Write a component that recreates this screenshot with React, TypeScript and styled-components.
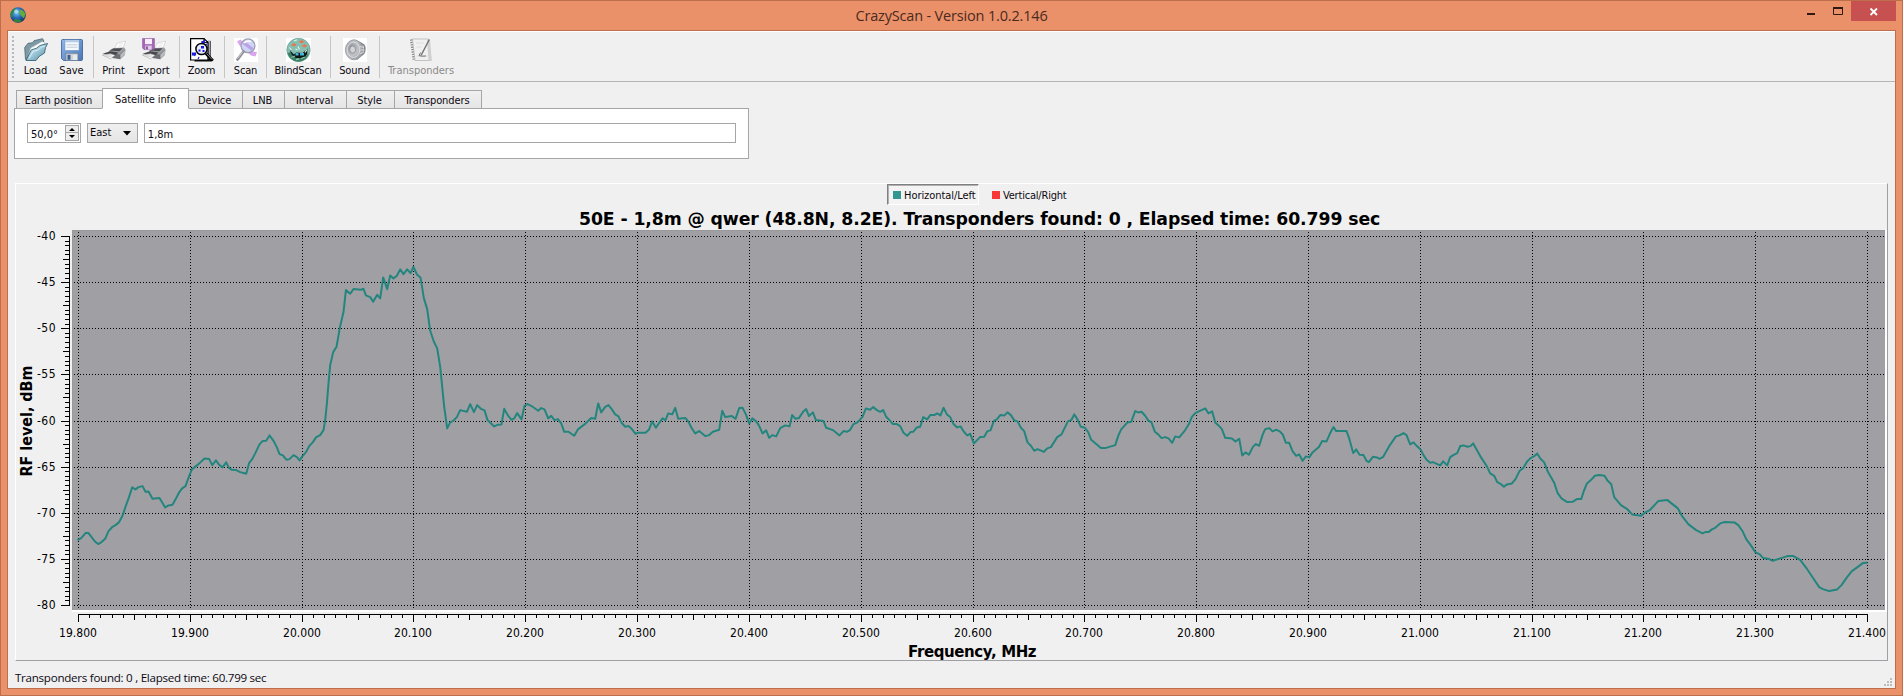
import React from "react";
import styled, { createGlobalStyle } from "styled-components";

const UI_FONT = '"DejaVu Sans Condensed", "DejaVu Sans", "Noto Sans", sans-serif';
const SEGOE = '"Open Sans", "Noto Sans", sans-serif';

const GlobalStyle = createGlobalStyle`
  * { box-sizing: border-box; }
  body { margin: 0; background: #eb916a; overflow: hidden; }
`;

const Window = styled.div`
  width: 1903px;
  height: 696px;
  display: flex;
  flex-direction: column;
  background: #eb916a;
  border: 1px solid #bd6e4b;
  padding: 0 6px 6px;
  font-family: ${UI_FONT};
  font-stretch: condensed;
  font-size: 11px;
  color: #0c0810;
`;

const TitleBar = styled.header`
  height: 29px;
  flex: none;
  display: flex;
  justify-content: space-between;
  align-items: flex-start;
`;

const TitleSide = styled.div<{ $end?: boolean }>`
  width: 120px;
  height: 29px;
  display: flex;
  justify-content: ${(p) => (p.$end ? "flex-end" : "flex-start")};
  padding: ${(p) => (p.$end ? "0" : "5px 0 0 2px")};
`;

const WindowTitle = styled.h1`
  margin: 0;
  font: 400 14.5px/30px ${SEGOE};
  font-stretch: normal;
  letter-spacing: -0.17px;
  color: #4a2a1e;
  white-space: nowrap;
`;

const CaptionButton = styled.button<{ $close?: boolean }>`
  border: 0;
  padding: 0;
  width: ${(p) => (p.$close ? "45px" : "27px")};
  height: 20px;
  background: ${(p) => (p.$close ? "#c75050" : "transparent")};
  svg { display: block; margin: auto; }
`;

const Client = styled.main`
  flex: 1;
  min-height: 0;
  display: flex;
  flex-direction: column;
  background: #f0f0f0;
  border: 1px solid #bd6e4b;
`;

const Toolbar = styled.div`
  height: 51px;
  flex: none;
  display: flex;
  gap: 1px;
  padding-left: 4px;
  border-top: 1px solid #fff;
  border-bottom: 1px solid #b5b5b5;
`;

const Handle = styled.div`
  width: 2px;
  height: 42px;
  margin: 4px 3px 0 0;
  background: repeating-linear-gradient(#b9b9b9 0 2px, transparent 2px 4px);
`;

const ToolButton = styled.button<{ $w: number }>`
  width: ${(p) => p.$w}px;
  padding: 6px 0 0;
  border: 0;
  background: none;
  display: flex;
  flex-direction: column;
  align-items: center;
  font: inherit;
  line-height: 15px;
  color: #0c0810;
  white-space: nowrap;
  &:disabled { color: #8a8a8a; }
  svg { display: block; flex: none; }
`;

const ToolLabel = styled.span<{ $ls?: number }>`
  margin-top: 1px;
  letter-spacing: ${(p) => p.$ls ?? 0}px;
`;

const Separator = styled.div<{ $w: number }>`
  width: ${(p) => p.$w}px;
  height: 42px;
  margin-top: 4px;
  background: linear-gradient(#c6c6c6, #c6c6c6) ${(p) => (p.$w === 5 ? 2 : 3)}px 0 / 1px 100% no-repeat;
`;

const Tabs = styled.nav`
  display: flex;
  align-items: flex-end;
  height: 21px;
  margin: 6px 0 -1px 8px;
  position: relative;
`;

const Tab = styled.button<{ $w: number; $active?: boolean; $first?: boolean }>`
  width: ${(p) => p.$w}px;
  height: ${(p) => (p.$active ? 21 : 19)}px;
  padding: ${(p) => (p.$active ? "2px 0 0" : "2px 2px 0 0")};
  border: 1px solid #a6a6a6;
  border-left-width: ${(p) => (p.$first || p.$active ? 1 : 0)}px;
  border-right-width: ${(p) => (p.$first ? 0 : 1)}px;
  border-bottom-color: ${(p) => (p.$active ? "#fff" : "#a6a6a6")};
  background: ${(p) => (p.$active ? "#fff" : "linear-gradient(#f0f0f0, #e5e5e5)")};
  font: inherit;
  line-height: 15px;
  letter-spacing: -0.1px;
  color: inherit;
  white-space: nowrap;
`;

const TabPane = styled.section`
  width: 735px;
  height: 51px;
  margin-left: 6px;
  flex: none;
  display: flex;
  gap: 6px;
  padding: 14px 12px;
  background: #fff;
  border: 1px solid #a6a6a6;
`;

const Field = styled.div<{ $w: number; $grey?: boolean; $pad?: number }>`
  width: ${(p) => p.$w}px;
  height: 20px;
  display: flex;
  align-items: center;
  justify-content: space-between;
  padding: 0 1px 0 ${(p) => p.$pad ?? 3}px;
  border: 1px solid #a6a6a6;
  background: ${(p) => (p.$grey ? "linear-gradient(#f0f0f0, #e5e5e5)" : "#fff")};
  line-height: 18px;
`;

const FieldText = styled.span`
  padding-top: 3px;
  line-height: 15px;
`;

const Spinner = styled.div`
  width: 14px;
  height: 16px;
  display: grid;
  grid-template-rows: 1fr 1fr;
  border: 1px solid #a6a6a6;
  background: #ededed;
`;

const SpinHalf = styled.span<{ $line?: boolean }>`
  display: flex;
  align-items: center;
  justify-content: center;
  border-bottom: ${(p) => (p.$line ? "1px solid #a6a6a6" : "0")};
`;

const ChartFrame = styled.section`
  width: 1873px;
  height: 478px;
  margin: 24px 0 0 7px;
  flex: none;
  display: flex;
  flex-direction: column;
  align-items: center;
  border: 1px solid;
  border-color: #fff #a0a0a4 #a0a0a4 #fff;
`;

const Legend = styled.div`
  display: flex;
  height: 21px;
  align-self: flex-start;
  margin-left: 871px;
  gap: 7px;
`;

const LegendItem = styled.span<{ $sunken?: boolean; $color: string }>`
  display: flex;
  align-items: center;
  gap: 3px;
  width: ${(p) => (p.$sunken ? 92 : 80)}px;
  padding: 1px 0 0 5px;
  letter-spacing: ${(p) => (p.$sunken ? -0.05 : -0.2)}px;
  white-space: nowrap;
  border: 1px solid transparent;
  ${(p) => p.$sunken && "border-color: #808080 #fff #fff #808080; box-shadow: inset 1px 1px 0 #b0b0b0; background: #f3f3f3;"}
  &::before {
    content: "";
    width: 8px;
    height: 8px;
    flex: none;
    background: ${(p) => p.$color};
  }
`;

const ChartTitle = styled.h2`
  margin: 0;
  height: 25px;
  align-self: flex-start;
  padding-left: 563px;
  font: 700 17.3px/28px "DejaVu Sans", sans-serif;
  font-stretch: normal;
  letter-spacing: -0.11px;
  color: #000;
  white-space: nowrap;
`;

const Plot = styled.svg`
  display: block;
  flex: none;
  width: 1871px;
  height: 412px;
  font: 400 12px ${UI_FONT};
  font-stretch: condensed;
`;

const AxisTitle = styled.div`
  height: 18px;
  align-self: flex-start;
  padding-left: 892px;
  font: 700 15px/21px "DejaVu Sans", sans-serif;
  font-stretch: normal;
  letter-spacing: -0.4px;
  color: #000;
  white-space: nowrap;
`;

const StatusBar = styled.footer`
  flex: 1;
  display: flex;
  justify-content: space-between;
  align-items: flex-end;
  padding: 0 3px 1px 7px;
  font: 400 11.6px/18px ${SEGOE};
  font-stretch: normal;
  letter-spacing: -0.27px;
`;

/* ---------- icons ---------- */

const Globe = () => (
  <svg width="18" height="18" viewBox="0 0 18 18">
    <defs>
      <radialGradient id="sea" cx=".42" cy=".35" r=".65">
        <stop offset="0" stopColor="#7cc9f5" />
        <stop offset=".5" stopColor="#2a6bbd" />
        <stop offset="1" stopColor="#14345f" />
      </radialGradient>
    </defs>
    <circle cx="9" cy="9" r="7.8" fill="url(#sea)" />
    <path d="M1.6 7Q3 3 6.500 2L6 5 3.500 7.500 4 11 2 11Z" fill="#2d8c3c" />
    <path d="M11 3.500Q15 4 16.300 8L15 12.500 12.500 10 10 7Z" fill="#5fae3a" />
    <path d="M5 13l5 .5 3 1.500Q9 17.500 5 15.400Z" fill="#2f8540" />
    <ellipse cx="7.300" cy="5.600" rx="2.300" ry="2" fill="#c4e9ff" opacity=".65" />
  </svg>
);

const Folder = () => (
  <svg width="24" height="24" viewBox="0 0 24 24">
    <defs>
      <linearGradient id="fold" x1="0" y1="0" x2="1" y2="1">
        <stop offset="0" stopColor="#e4f3f8" />
        <stop offset=".5" stopColor="#9cc7d8" />
        <stop offset="1" stopColor="#4b8199" />
      </linearGradient>
    </defs>
    <path d="M1.500 21.500L.7 9.500 4 5.300 8.500 4.800 10 2.700 18.500.7 20 3 5 19Z" fill="#7d9aa6" stroke="#4b6570" strokeWidth=".8" />
    <path d="M4 18L6.500 10 18 3.500 21 4.500 19 8Z" fill="#fdfdfd" stroke="#8aa" strokeWidth=".5" />
    <path d="M2 22.500L7.300 11.800Q13 11 16 7.500L23.600 5.500Q21 9 20.500 15Q15 17.500 12 22.500Z" fill="url(#fold)" stroke="#3e6475" strokeWidth=".9" />
    <path d="M5 20.500L9 13.500Q15 12.500 17.500 9L21 8" fill="none" stroke="#eaf8fd" strokeWidth="1" opacity=".8" />
  </svg>
);

const Floppy = () => (
  <svg width="24" height="24" viewBox="0 0 24 24">
    <defs>
      <linearGradient id="flop" x1="0" y1="0" x2="1" y2="1">
        <stop offset="0" stopColor="#91b8ea" />
        <stop offset="1" stopColor="#4a76b5" />
      </linearGradient>
    </defs>
    <path d="M1.500 2.500Q1.500 1.500 2.700 1.500H21.300Q22.500 1.500 22.500 2.500V21.500Q22.500 22.500 21.300 22.500H3.500L1.500 20.500Z" fill="url(#flop)" stroke="#4468a0" strokeWidth=".9" />
    <rect x="5" y="2" width="14" height="10.300" fill="#f6f9fc" stroke="#7b9bc8" strokeWidth=".6" />
    <rect x="5" y="2" width="14" height="2.300" fill="#b5cbe6" />
    <path d="M6.500 6.800h11M6.500 9.200h11" stroke="#bfcbd8" />
    <rect x="6" y="15.300" width="12" height="7" fill="#cfd4d6" stroke="#6b7d92" strokeWidth=".6" />
    <rect x="7.500" y="16.800" width="3" height="5" fill="#3f5f8e" />
    <path d="M13 17h4v5h-4Z" fill="#e8ebec" />
  </svg>
);

const PrinterShape = () => (
  <g>
    <path d="M12 11.500L15.500 5 23.700 3 20.500 11.500Z" fill="#fff" stroke="#c2c2c2" strokeWidth=".6" />
    <path d="M17 6.500l4-1M16 8.500l4-1" stroke="#ddd" strokeWidth=".7" />
    <path d="M7 12.800L11.500 10 22 9.500 23.500 11.500 18.500 16.500 8 16Z" fill="#9a9da0" />
    <path d="M7.500 12.500l4-2 9-.3-3 3Z" fill="#4a4c50" />
    <path d="M8.500 15.500l9.500.8 5.300-4.800-.3 5.200-4.700 4.500-8-1.200Z" fill="#6b6e72" />
    <path d="M18.300 16.700l4.900-4.700-.2 4.500-4.600 4.400Z" fill="#b9bcbf" />
    <path d="M.8 15.800L8 13.300 16.500 14.500 11.500 18.500Z" fill="#45474b" />
    <path d="M.3 17L8.500 15.800 13 17.200 8.500 20.800Z" fill="#f6f6f6" stroke="#a5a5a5" strokeWidth=".6" />
    <path d="M3 17.600l6-.8M5 18.700l5-.8" stroke="#c4c4c4" strokeWidth=".6" />
  </g>
);

const Printer = () => (
  <svg width="24" height="24" viewBox="0 0 24 24"><PrinterShape /></svg>
);

const ExportIcon = () => (
  <svg width="24" height="24" viewBox="0 0 24 24">
    <PrinterShape />
    <path d="M.6.600h11.800v11H2L.6 10Z" fill="#a468b6" stroke="#8a4d9c" strokeWidth=".6" />
    <rect x="3" y=".9" width="7" height="5.200" fill="#f8eefa" />
    <rect x="3.300" y="7.600" width="6.400" height="4" fill="#e2cce8" />
    <rect x="4.200" y="8.400" width="1.600" height="3.100" fill="#7a4290" />
  </svg>
);

const ZoomIcon = () => (
  <svg width="24" height="24" viewBox="0 0 24 24">
    <path d="M4.500 3H21v20.500H4.500Z" fill="#111" />
    <path d="M18 2.500h2.500V21H18Z" fill="#a9a9b4" />
    <path d="M.6.600H14l4 4V22H.6Z" fill="#fff" stroke="#000" strokeWidth="1.200" />
    <path d="M14 .6v4h4" fill="none" stroke="#000" />
    <path d="M2 16l2.500-1M4 18l1.500-2M13 4l2-2M15 7l2-1M8 21l1-2M2.500 15h3v1.800h-3ZM12 3.500h2v2h-2Z" stroke="#1b1be0" strokeWidth="1.200" fill="#1b1be0" />
    <circle cx="11.500" cy="11" r="5.600" fill="#e9ebff" stroke="#000" strokeWidth="1.500" />
    <path d="M8.500 11.500h2v2h-2ZM11 8h3v2.500h-3ZM12.500 12h2v2h-2Z" fill="#1b1be0" />
    <path d="M15.800 15.300L22.800 22.800" stroke="#000" strokeWidth="3" />
    <path d="M16.500 15.500L22 21.400" stroke="#aaa" strokeWidth=".8" />
  </svg>
);

const ScanIcon = () => (
  <svg width="24" height="24" viewBox="0 0 24 24">
    <rect width="24" height="24" fill="#fff" />
    <path d="M3 3.500L6.500 1.500 9 4 19 13.500 23 14 21.500 18.500 17 17.500 5.500 7.500Z" fill="#dba5ee" />
    <circle cx="14" cy="7.800" r="6.900" fill="#cfd3f6" stroke="#9ba0b5" strokeWidth="1.300" />
    <path d="M9.500 4.500L18.500 11.500" stroke="#ac82dc" strokeWidth="3.400" opacity=".6" />
    <path d="M10 5Q13 1.800 17 3.500" stroke="#fff" strokeWidth="1.500" fill="none" />
    <path d="M9.500 13.500L3.500 21.500" stroke="#8f8a96" strokeWidth="2.800" strokeLinecap="round" />
    <path d="M9 13.500L3.500 20.500" stroke="#d9d7dd" strokeWidth="1" />
  </svg>
);

const BlindIcon = () => (
  <svg width="25" height="24" viewBox="0 0 25 24">
    <rect width="25" height="24" fill="#fff" />
    <circle cx="12.500" cy="12" r="11.700" fill="#86bfb2" stroke="#5f9388" strokeWidth=".6" />
    <path d="M1.500 15.500Q5 13 7 15L9 18.500 20 18 23 14.500Q21.500 23 12.500 23.700Q4 23 1.500 15.500Z" fill="#3c8068" />
    <path d="M3.500 11.500l4 5 3-2 6 .5 3-2.500 2-2-.3 5.500-3.200 4H10L6 17Z" fill="#0b1717" />
    <path d="M9.500 15h3v2.500h-3ZM14 15h4v2.500h-4Z" fill="#45b5dc" />
    <path d="M5 7.500l2.500-2.500 3 1.500-1.500 2ZM12.500 4l3-2 3 1.500-2.500 2ZM15.500 8l3-2 3 2-3 1.500Z" fill="#e07a52" />
    <path d="M8 3l3-1.200M3.500 9.500l2 2.500M21 11.500l-2 3M12 8.500l1.500 3M9.500 11l2 1" stroke="#dcf3ea" strokeWidth="1.200" />
    <path d="M5.500 19.500l3.500-1.500M15 20.500l4-1.500M10 21.500l3-.5" stroke="#8cc7a0" strokeWidth="1.300" />
  </svg>
);

const SoundIcon = () => (
  <svg width="24" height="24" viewBox="0 0 24 24">
    <defs>
      <radialGradient id="cone" cx=".35" cy=".4" r=".7">
        <stop offset="0" stopColor="#8b8f96" />
        <stop offset=".55" stopColor="#bfc2c6" />
        <stop offset="1" stopColor="#979ba0" />
      </radialGradient>
    </defs>
    <rect width="24" height="24" fill="#fff" />
    <path d="M12 2Q17 3 21.500 6.500Q24 11 21.300 16L14 22Z" fill="#83878d" />
    <path d="M15 5l6 3v6l-5 4Z" fill="#b7babe" />
    <ellipse cx="11" cy="11.800" rx="8.600" ry="10" fill="url(#cone)" stroke="#999da2" strokeWidth=".9" />
    <ellipse cx="10.500" cy="11.800" rx="6.300" ry="7.600" fill="none" stroke="#dcdee0" strokeWidth=".9" />
    <ellipse cx="9.700" cy="11.500" rx="2.900" ry="3.500" fill="#d2d4d7" stroke="#808080" strokeWidth=".6" />
    <path d="M17 8.500l4 1M17.500 12h4M17 15.500l3.500-1" stroke="#eee" strokeWidth=".7" />
  </svg>
);

const NotebookIcon = () => (
  <svg width="24" height="24" viewBox="0 0 24 24">
    <path d="M3.500 1H19.500L22 22.500H6Z" fill="#f0f0f0" stroke="#b5b5b5" strokeWidth=".8" />
    <path d="M18 1.500H21L22.800 22.700H19.500Z" fill="#d0d0d0" />
    <path d="M2 1.500L4.800 22.500" stroke="#858585" strokeWidth="2.200" strokeDasharray="1.200 1.200" />
    <path d="M7 5h8M7.500 9h5M8 18h11" stroke="#d8d8d8" strokeWidth=".8" />
    <path d="M20.300 1.500L12 17.500" stroke="#707070" strokeWidth="1.400" />
    <path d="M11.500 14.500L10 17.600Q12 18.600 17 18" stroke="#777" strokeWidth="1" fill="none" />
  </svg>
);

/* ---------- spectrum data ---------- */

/* Trace samples by block: origin in window pixels, then x,y pairs in thirds of a pixel. */
const BLOCKS: Array<[number, number, string]> = [
  [60, 380, "52,480 63,474 76,459 85,459 104,484 114,492 124,486 135,476 145,453 157,440 166,435 176,427 187,407 198,374 206,352 216,322 226,328 235,321 247,318 256,335 265,334 277,356 298,354 315,382 325,376 337,374 350,350 358,335 366,325 376,318 387,287 395,268 415,252 433,235 447,237 456,255 467,241 477,254 487,262 498,247 506,263 515,269 528,270 540,276 558,281 567,248 576,237 585,220 598,193 607,183 618,182 628,166 640,182 650,202 658,222 668,226 679,239 688,237 700,225 710,231 718,241 727,228 738,215 747,198 758,186 768,171 780,165"],
  [300, 240, "70,570 75,540 80,490 85,430 90,375 99,336 109,320 119,262 130,216 137,150 150,161 160,147 182,149 190,146 197,166 210,171 219,185 231,164 240,175 249,112 261,147 270,106 280,115 290,107 300,88 310,102 321,88 331,99 340,80 350,103 361,112 371,175 381,207 390,272 401,305 411,325 420,380 432,500"],
  [400, 360, "141,205 150,187 159,182 170,171 180,150 200,155 210,132 221,156 231,135 242,146 253,151 262,180 282,199 292,194 304,193 312,146 323,166 334,179 342,175 351,159 364,178 373,137 382,132 393,137 414,152 423,144 433,148 444,175 453,167 463,180 473,177 483,190 492,215 505,215 522,227 534,207 553,193 573,174 585,176 594,130 603,157 615,140 625,135 635,148 645,163 655,169 664,188 675,200 685,198 695,207 706,221 714,218 736,218 746,209 756,184 767,203 777,188 787,175 796,180 804,160 816,163 825,143 834,176 856,174 865,185 874,203 885,220 897,213 915,228 927,225 938,215 957,209 966,152 975,171 995,168 1006,176 1017,144 1027,143 1037,163 1047,190 1056,175 1067,183 1076,196 1087,220 1098,211 1107,233 1117,225 1128,229"],
  [780, 360, "0,204 15,196 28,199 36,165 46,176 56,174 68,156 78,147 86,168 98,157 107,180 130,183 138,203 160,211 178,226 190,213 200,215 210,209 220,192 232,187 247,170 257,145 270,149 279,141 290,150 300,155 309,150 318,170 328,180 338,192 350,192 360,198 370,218 381,227 391,216 399,215 410,202 420,200 429,171 441,178 450,165 462,165 471,160 481,166 490,143 500,163 510,171 520,192 531,202 541,199 551,215 561,226 570,221 581,250 600,231 612,230 622,213 631,211 641,182 650,178 660,165 673,166 682,157 692,165 702,181 712,184 722,203 732,213 742,247 752,257 762,272 772,267 791,275 801,265 812,261 831,231 844,223 863,184 874,179 882,163 892,178 902,200 914,203 924,216 933,239 947,251 962,264 975,264 1005,255 1015,225 1023,208 1042,187 1053,185"],
  [1130, 360, "15,153 24,157 34,155 45,167 54,181 64,187 74,215 84,223 94,234 105,231 115,235 126,248 135,229 147,232 165,210 176,192 185,170 196,158 206,154 225,145 235,160 246,154 255,187 265,196 275,207 285,233 305,235 316,244 327,236 336,286 346,277 356,284 369,259 377,252 387,257 397,225 405,207 417,204 427,214 437,209 448,213 458,224 467,248 477,248 487,273 498,287 507,283 517,302 527,289 537,292 547,277 566,261 576,243 589,244 600,219 610,201 618,213 649,213 657,235 669,279 678,268 688,284 700,285 709,302 716,306 728,290 740,292 748,296 759,290 779,255 797,229 808,226 820,219 829,225 840,253 850,247 860,258 871,268 880,285 890,300 900,308 908,306 930,316 939,304 951,316 960,291 969,285 981,279 990,258 1000,256 1012,260 1021,258 1029,250 1050,288 1070,319 1080,340 1092,347 1101,366 1111,371"],
  [1500, 400, "11,260 20,253 35,250 46,237 58,213 70,203 80,185 90,175 101,169 111,160 121,176 132,187 143,215 162,248 172,278 184,295 201,306 217,305 230,297 243,297 251,272 260,250 272,240 284,227 297,225 313,227 323,243 333,252 342,291 362,315 380,326 396,343 423,347 433,338 450,329 465,313 474,303 502,300 513,309 533,325 545,347 565,373 588,390 607,400 615,396 625,396 635,388 645,383 660,370 672,366 703,367 715,376 728,395 738,417 752,436 766,457 778,462 789,474 808,477 817,482 840,475 862,468 880,468 900,479 918,503 938,533 957,561 968,567 987,573 1011,568 1024,555 1040,532 1055,513 1072,501 1088,489 1102,488"],
];

const TRACE = BLOCKS.flatMap(([ox, oy, pts]) =>
  pts.split(" ").map((pair) => {
    const [x, y] = pair.split(",").map(Number);
    return `${(ox + x / 3).toFixed(1)},${(oy + y / 3).toFixed(1)}`;
  })
).join(" ");

const xAt = (i: number) => Math.round(78 + (i * 1789) / 160);
const yAt = (i: number) => Math.round(236 + (i * 369) / 80);

const xTicks = Array.from({ length: 161 }, (_, i) => i);
const yTicks = Array.from({ length: 81 }, (_, i) => i);

const Spectrum = () => (
  <Plot viewBox="16 230 1871 412">
    <rect x="72" y="230" width="1815" height="382" fill="#fff" />
    <rect x="72" y="230" width="1813" height="380" fill="#a0a0a4" />
    <path d="M72.500 610V230.500H1885" fill="none" stroke="#98989b" />
    <g stroke="#000" strokeDasharray="1 2" shapeRendering="crispEdges">
      {xTicks.filter((i) => i % 10 === 0).map((i) => (
        <line key={i} x1={xAt(i) + 0.5} x2={xAt(i) + 0.5} y1={232} y2={609} />
      ))}
      {yTicks.filter((i) => i % 10 === 0).map((i) => (
        <line key={i} x1={74} x2={1885} y1={yAt(i) + 0.5} y2={yAt(i) + 0.5} />
      ))}
    </g>
    <polyline points={TRACE} transform="translate(.2 .1)" fill="none" stroke="#24857f" strokeWidth="2" strokeLinejoin="round" />
    <g fill="#000" shapeRendering="crispEdges">
      <rect x="69" y="236" width="1" height="370" />
      <rect x="78" y="614" width="1790" height="1" />
      {yTicks.map((i) => {
        const len = i % 10 === 0 ? 8 : i % 5 === 0 ? 6 : 4;
        return <rect key={i} x={69 - len} y={yAt(i)} width={len} height="1" />;
      })}
      {xTicks.map((i) => (
        <rect key={i} x={xAt(i)} y="614" width="1" height={i % 10 === 0 ? 8 : i % 5 === 0 ? 6 : 4} />
      ))}
    </g>
    <g fill="#000">
      {yTicks.filter((i) => i % 10 === 0).map((i) => (
        <text key={i} x="55.500" y={yAt(i) + 4} textAnchor="end" textLength="18.600">{-40 - i / 2}</text>
      ))}
      {xTicks.filter((i) => i % 10 === 0).map((i) => (
        <text key={i} x={xAt(i)} y="637" textAnchor="middle">{(19.8 + i / 100).toFixed(3)}</text>
      ))}
      <text transform="translate(32 476.500) rotate(-90)" fontSize="16" fontWeight="700" textLength="111">RF level, dBm</text>
    </g>
  </Plot>
);

const Tool = ({ w, label, ls, disabled, children }: { w: number; label: string; ls?: number; disabled?: boolean; children: React.ReactNode }) => (
  <ToolButton $w={w} disabled={disabled}>
    {children}
    <ToolLabel $ls={ls}>{label}</ToolLabel>
  </ToolButton>
);

export default function App() {
  return (
    <>
      <GlobalStyle />
      <Window>
        <TitleBar>
          <TitleSide><Globe /></TitleSide>
          <WindowTitle>CrazyScan - Version 1.0.2.146</WindowTitle>
          <TitleSide $end>
            <CaptionButton aria-label="Minimize">
              <svg width="27" height="20"><rect x="10" y="12" width="8" height="2" fill="#2e1a12" /></svg>
            </CaptionButton>
            <CaptionButton aria-label="Maximize">
              <svg width="27" height="20"><path d="M9.500 7V13.500H18.500V7" fill="none" stroke="#2e1a12" /><rect x="9" y="6" width="10" height="2" fill="#2e1a12" /></svg>
            </CaptionButton>
            <CaptionButton $close aria-label="Close">
              <svg width="45" height="20"><path d="M19.500 7.500L26 14M26 7.500L19.500 14" stroke="#fff" strokeWidth="1.800" /></svg>
            </CaptionButton>
          </TitleSide>
        </TitleBar>
        <Client>
          <Toolbar>
            <Handle />
            <Tool w={35} label="Load"><Folder /></Tool>
            <Tool w={35} label="Save"><Floppy /></Tool>
            <Separator $w={6} />
            <Tool w={33} label="Print"><Printer /></Tool>
            <Tool w={45} label="Export"><ExportIcon /></Tool>
            <Separator $w={5} />
            <Tool w={37} label="Zoom" ls={-0.3}><ZoomIcon /></Tool>
            <Separator $w={6} />
            <Tool w={35} label="Scan" ls={-0.2}><ScanIcon /></Tool>
            <Separator $w={5} />
            <Tool w={56} label="BlindScan" ls={-0.2}><BlindIcon /></Tool>
            <Separator $w={6} />
            <Tool w={41} label="Sound" ls={-0.1}><SoundIcon /></Tool>
            <Separator $w={6} />
            <Tool w={76} label="Transponders" disabled><NotebookIcon /></Tool>
          </Toolbar>
          <Tabs>
            <Tab $w={86} $first>Earth position</Tab>
            <Tab $w={87} $active>Satellite info</Tab>
            <Tab $w={54}>Device</Tab>
            <Tab $w={42}>LNB</Tab>
            <Tab $w={62}>Interval</Tab>
            <Tab $w={48}>Style</Tab>
            <Tab $w={87}>Transponders</Tab>
          </Tabs>
          <TabPane>
            <Field $w={54}>
              <FieldText>50,0°</FieldText>
              <Spinner>
                <SpinHalf $line><svg width="6" height="3"><path d="M0 3L3 0 6 3Z" /></svg></SpinHalf>
                <SpinHalf><svg width="6" height="3"><path d="M0 0L3 3 6 0Z" /></svg></SpinHalf>
              </Spinner>
            </Field>
            <Field $w={51} $grey $pad={2}>
              East
              <svg width="13" height="5"><path d="M0 0H8L4 4.500Z" /></svg>
            </Field>
            <Field $w={593} $pad={3}><FieldText>1,8m</FieldText></Field>
          </TabPane>
          <ChartFrame>
            <Legend>
              <LegendItem $sunken $color="#329691">Horizontal/Left</LegendItem>
              <LegendItem $color="#fa3737">Vertical/Right</LegendItem>
            </Legend>
            <ChartTitle>50E - 1,8m @ qwer (48.8N, 8.2E). Transponders found: 0 , Elapsed time: 60.799 sec</ChartTitle>
            <Spectrum />
            <AxisTitle>Frequency, MHz</AxisTitle>
          </ChartFrame>
          <StatusBar>
            <span>Transponders found: 0 , Elapsed time: 60.799 sec</span>
            <svg width="8" height="9" fill="#bdbdbd">
              <path d="M6 0h2v2h-2ZM3 3h2v2h-2ZM6 3h2v2h-2ZM0 6h2v2h-2ZM3 6h2v2h-2ZM6 6h2v2h-2Z" />
            </svg>
          </StatusBar>
        </Client>
      </Window>
    </>
  );
}
